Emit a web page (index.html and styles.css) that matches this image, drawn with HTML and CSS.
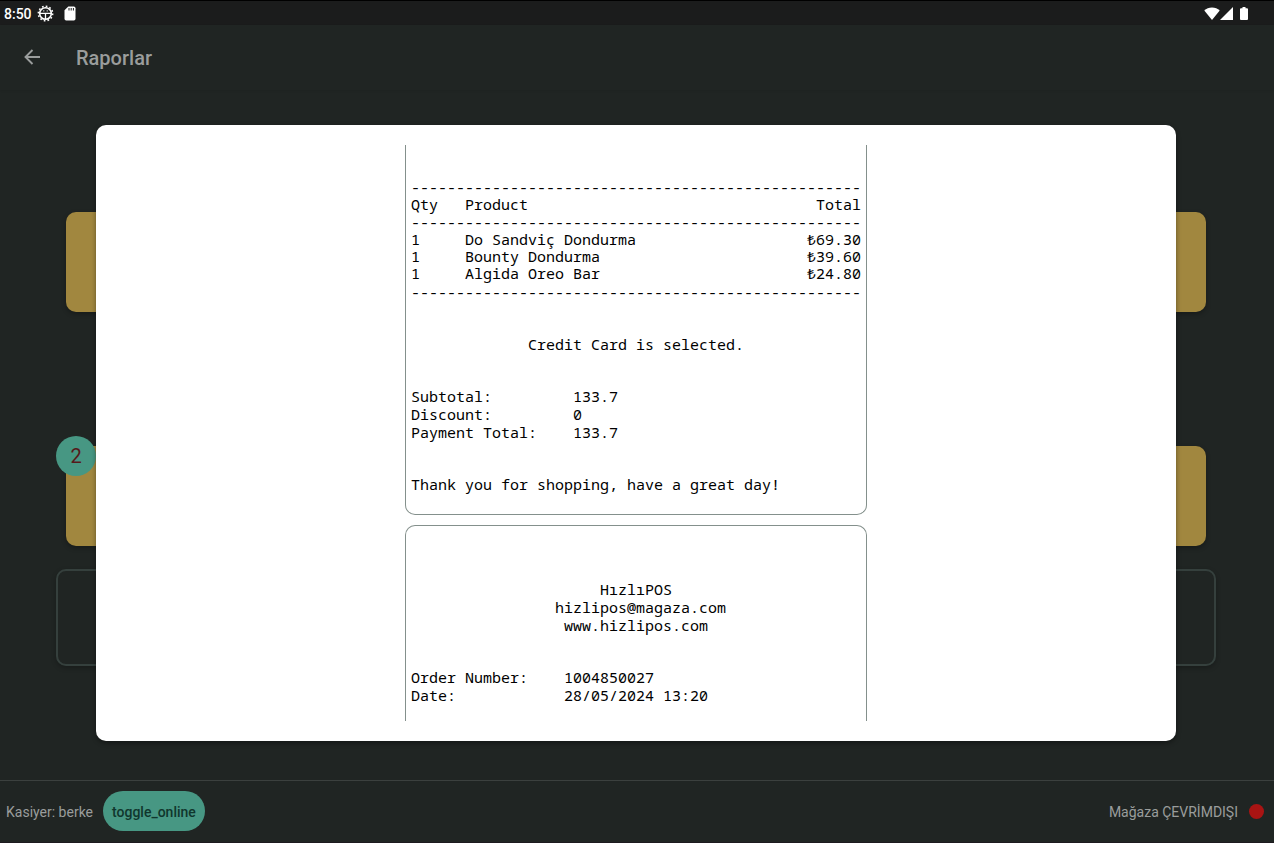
FILE: index.html
```html
<!DOCTYPE html>
<html lang="tr">
<head>
<meta charset="utf-8">
<meta name="viewport" content="width=device-width, initial-scale=1">
<title>Raporlar</title>
<link rel="stylesheet" href="styles.css">
</head>
<body>
<div class="screen">
  <div class="status-bar">
    <div class="status-left">
      <span class="clock">8:50</span>
      <svg class="status-gear" width="17" height="17" viewBox="0 0 17 17">
        <circle cx="8.500" cy="8.500" r="7.200" fill="none" stroke="#fff" stroke-width="1.500" stroke-dasharray="1.700 2.070"/>
        <circle cx="8.500" cy="8.500" r="5.800" fill="none" stroke="#fff" stroke-width="1.600"/>
        <path d="M3 8.400h11M8.500 9v5M6.300 5.800h1M9.700 5.800h1" stroke="#fff" stroke-width="1.300" fill="none"/>
      </svg>
      <svg class="status-card" width="12" height="15" viewBox="0 0 12 15">
        <path d="M4.300.5h5.500A1.700 1.700 0 0 1 11.500 2.200v10.600a1.700 1.700 0 0 1-1.700 1.700H2.200A1.700 1.700 0 0 1 .5 12.800V4.300z" fill="#fff"/>
        <path d="M5 2v2.500M7.200 2v2.500M9.400 2v2.500" stroke="#1b1c1c" stroke-width="1"/>
      </svg>
    </div>
    <div class="status-right">
      <svg width="16" height="13" viewBox="0 0 16 13"><path d="M8 13 .3 3.600C2.300 1.600 5 .4 8 .4s5.700 1.200 7.700 3.200z" fill="#fff"/></svg>
      <svg width="13" height="13" viewBox="0 0 13 13"><path d="M13 0v13H0z" fill="#fff"/></svg>
      <svg class="battery" width="8" height="13" viewBox="0 0 8 13"><path d="M2.500 0h3v1.200H7a1 1 0 0 1 1 1V12a1 1 0 0 1-1 1H1a1 1 0 0 1-1-1V2.200a1 1 0 0 1 1-1h1.500z" fill="#fff"/></svg>
    </div>
  </div>

  <header class="app-bar">
    <button class="back" type="button" aria-label="Geri">
      <svg width="16" height="18" viewBox="0 0 16 18"><path d="M16 8H1.500M8.500 1 1.500 8l7 7" fill="none" stroke="#9a9d9c" stroke-width="1.900"/></svg>
    </button>
    <h1 class="title">Raporlar</h1>
  </header>

  <main class="reports">
    <div class="tile"></div>
    <div class="tile tile-second"><span class="badge">2</span></div>
    <div class="panel"></div>
  </main>

  <footer class="footer">
    <div class="footer-group">
      <span class="footer-text">Kasiyer: berke</span>
      <button class="toggle" type="button">toggle_online</button>
    </div>
    <div class="footer-group footer-status">
      <span class="footer-text">Mağaza ÇEVRİMDIŞI</span>
      <span class="dot"></span>
    </div>
  </footer>

  <div class="overlay">
    <section class="dialog" role="dialog">
      <div class="receipts">
        <article class="receipt receipt-first">
          <p class="rule">--------------------------------------------------</p>
          <table class="items">
            <thead>
              <tr><th class="qty">Qty</th><th>Product</th><th class="total">Total</th></tr>
              <tr><td class="rule" colspan="3">--------------------------------------------------</td></tr>
            </thead>
            <tbody>
              <tr><td>1</td><td>Do Sandviç Dondurma</td><td class="total">₺69.30</td></tr>
              <tr><td>1</td><td>Bounty Dondurma</td><td class="total">₺39.60</td></tr>
              <tr><td>1</td><td>Algida Oreo Bar</td><td class="total">₺24.80</td></tr>
            </tbody>
          </table>
          <p class="rule">--------------------------------------------------</p>
          <p class="block centered">Credit Card is selected.</p>
          <dl class="block pairs pairs-totals">
            <dt>Subtotal:</dt><dd>133.7</dd>
            <dt>Discount:</dt><dd>0</dd>
            <dt>Payment Total:</dt><dd>133.7</dd>
          </dl>
          <p class="block">Thank you for shopping, have a great day!</p>
        </article>
        <article class="receipt receipt-second">
          <p class="shop centered">HızlıPOS<br>&nbsp;hizlipos@magaza.com<br>www.hizlipos.com</p>
          <dl class="block pairs pairs-order">
            <dt>Order Number:</dt><dd>1004850027</dd>
            <dt>Date:</dt><dd>28/05/2024 13:20</dd>
          </dl>
        </article>
      </div>
    </section>
  </div>
</div>
</body>
</html>
```
FILE: styles.css
```css
* { box-sizing: border-box; }

body {
  margin: 0;
  background: #202523;
  color: #9a9d9c;
  font-family: Roboto, sans-serif;
  font-size: 14px;
}

h1, p, dl, dd { margin: 0; }
svg { display: block; }
button { border: 0; padding: 0; font: inherit; cursor: pointer; }

.screen {
  position: relative;
  display: flex;
  flex-direction: column;
  height: 100vh;
  overflow: hidden;
  border-bottom: 1px solid #1d1a1f;
}

.status-bar {
  display: flex;
  align-items: center;
  justify-content: space-between;
  height: 25px;
  padding: 1px 26px 0 4px;
  border-top: 1px solid #000;
  background: #1b1c1c;
  color: #fff;
}
.status-left, .status-right { display: flex; align-items: center; }
.clock { font-weight: 500; }
.status-gear { margin-left: 5px; }
.status-card { margin-left: 10px; }
.battery { margin-left: 7px; }

.app-bar {
  display: flex;
  align-items: center;
  height: 65px;
  padding: 0 24px;
  gap: 36px;
  box-shadow: 0 1px 2px rgba(0, 0, 0, 0.06);
}
.back { background: none; }
.title { font-size: 20px; font-weight: 500; line-height: 24px; }

.reports {
  flex: 1;
  padding: 122px 58px 0 56px;
}
.tile {
  position: relative;
  height: 100px;
  margin: 0 10px;
  border-radius: 10px;
  background: #a1873f;
  box-shadow: 0 2px 5px rgba(0, 0, 0, 0.3);
}
.tile-second { margin-top: 134px; }
.badge {
  position: absolute;
  top: -10px;
  left: -10px;
  width: 40px;
  border-radius: 20px;
  background: #479783;
  color: #56191a;
  font-size: 20px;
  line-height: 40px;
  text-align: center;
}
.panel {
  height: 97px;
  margin-top: 23px;
  border: 2px solid #35403d;
  border-radius: 10px;
  box-shadow: 0 2px 5px rgba(0, 0, 0, 0.25);
}

.footer {
  display: flex;
  align-items: center;
  justify-content: space-between;
  height: 62px;
  padding: 0 10px 1px 6px;
  border-top: 1px solid #3b403e;
}
.footer-group { display: flex; align-items: center; gap: 10px; }
.footer-status { gap: 11px; }
.footer-text { padding-top: 2px; }
.toggle {
  height: 40px;
  padding: 2px 9px 0;
  border-radius: 20px;
  background: #479783;
  color: #10362d;
  font-weight: 500;
}
.dot { width: 15px; height: 15px; border-radius: 50%; background: #a91413; }

.overlay {
  position: absolute;
  inset: 0;
  display: flex;
  padding: 125px 98px 101px 96px;
}
.dialog {
  flex: 1;
  display: flex;
  justify-content: center;
  padding: 20px;
  border-radius: 10px;
  background: #fff;
  box-shadow: 0 2px 5px rgba(0, 0, 0, 0.4);
}
.receipts {
  width: 462px;
  overflow: hidden;
  color: #000;
  font-family: "Droid Sans Mono", "Noto Sans Mono", "DejaVu Sans Mono", monospace;
  font-size: 15px;
  line-height: 17px;
}
.receipt {
  padding: 0 5px;
  border: 1px solid #84908c;
}
.receipt-first {
  padding-top: 33px;
  padding-bottom: 21px;
  border-top: 0;
  border-radius: 0 0 10px 10px;
}
.receipt-second {
  margin-top: 10px;
  padding-top: 54px;
  padding-bottom: 34px;
  border-bottom: 0;
  border-radius: 10px 10px 0 0;
}
.rule { line-height: 18px; white-space: nowrap; }
.items { width: 100%; margin-bottom: 1px; table-layout: fixed; border-collapse: collapse; }
.items th, .items td { padding: 0; text-align: left; font-weight: 400; }
.items .qty { width: 54px; }
.items .total { width: 90px; text-align: right; }
.block { margin-top: 35px; }
.centered { text-align: center; }
.shop { line-height: 18px; }
.pairs { display: grid; row-gap: 1px; }
.pairs-totals { grid-template-columns: 162px 1fr; }
.pairs-order { grid-template-columns: 153px 1fr; }
```
